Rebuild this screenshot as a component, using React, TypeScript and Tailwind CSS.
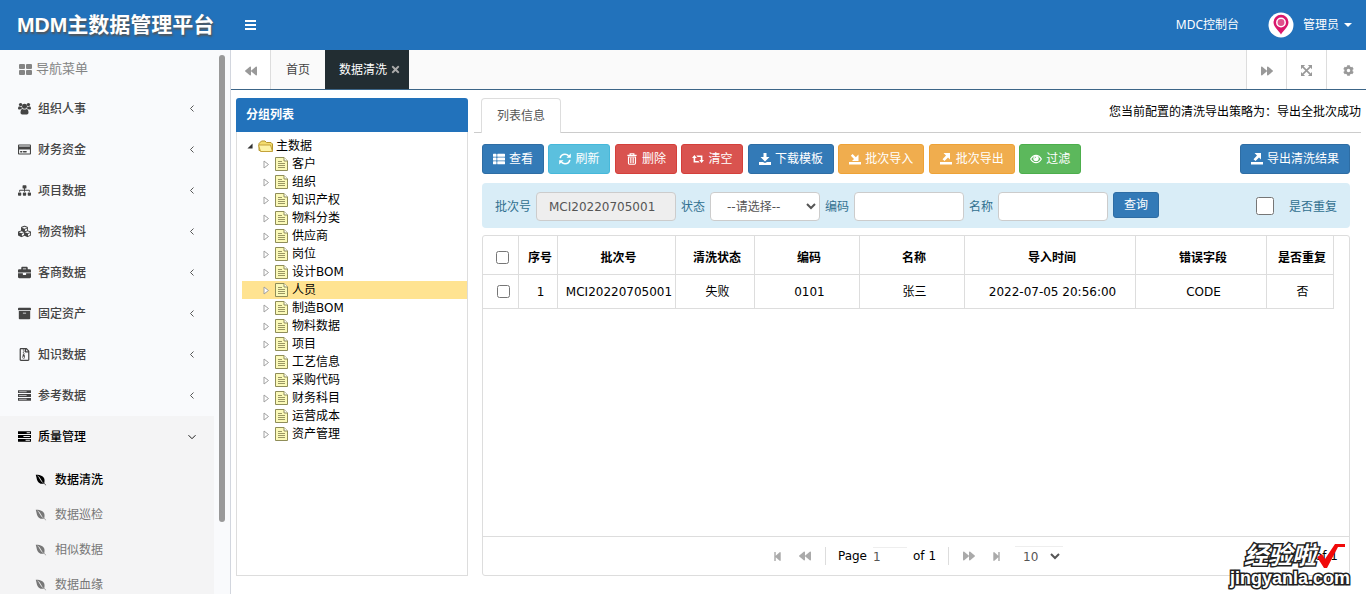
import React from 'react';
import {
  FaArchive,
  FaBackward,
  FaBriefcase,
  FaCog,
  FaCubes,
  FaEnvira,
  FaForward,
  FaRegCreditCard,
  FaRegFileArchive,
  FaSitemap,
  FaStepBackward,
  FaStepForward,
  FaThList,
  FaTimes,
} from 'react-icons/fa';

interface IconProps {
  className?: string;
}

type Icon = React.ComponentType<IconProps>;

const BarsIcon: React.FC<IconProps> = ({ className }) => (
  <svg viewBox="0 0 11 10" fill="currentColor" className={className}>
    <rect width="11" height="2" />
    <rect y="4" width="11" height="2" />
    <rect y="8" width="11" height="2" />
  </svg>
);

const GridIcon: React.FC<IconProps> = ({ className }) => (
  <svg viewBox="0 0 13 11" fill="currentColor" className={className}>
    <rect width="6" height="5" rx="1" />
    <rect x="7" width="6" height="5" rx="1" />
    <rect y="6" width="6" height="5" rx="1" />
    <rect x="7" y="6" width="6" height="5" rx="1" />
  </svg>
);

const UsersIcon: React.FC<IconProps> = ({ className }) => (
  <svg viewBox="0 0 13 13" fill="currentColor" className={className}>
    <circle cx="2.600" cy="2.600" r="1.700" />
    <circle cx="10.400" cy="2.600" r="1.700" />
    <circle cx="6.500" cy="4.200" r="2.500" />
    <path d="M0 6.800Q0 4.200 1.200 4.200q1.800.8 2.400.4Q3.700 6 4.300 6.600 3 6.700 2.400 7.600H1Q0 7.600 0 6.800zM13 6.800q0-2.600-1.200-2.600-1.800.8-2.400.4Q9.300 6 8.700 6.600q1.300.1 1.900 1H12q1 0 1-.8z" />
    <path d="M2.500 10.800q0-3.800 2-3.800 2 1.200 4 0 2 0 2 3.800 0 1.700-1.700 1.700H4.200q-1.700 0-1.700-1.700z" />
  </svg>
);

const ServerIcon: React.FC<IconProps> = ({ className }) => (
  <svg viewBox="0 0 12 12" fill="none" className={className}>
    <path d="M0 2.500h12M0 6h12M0 9.500h12" stroke="currentColor" strokeWidth="2.600" />
    <path d="M1 2.500h7M1 6h7M1 9.500h7" stroke="#c8c8ca" strokeWidth="0.800" />
  </svg>
);

const TasksIcon: React.FC<IconProps> = ({ className }) => (
  <svg viewBox="0 0 12 12" fill="none" className={className}>
    <path d="M0 2.500h12M0 6h12M0 9.500h12" stroke="currentColor" strokeWidth="2.600" />
    <path d="M8 2.500h3M5 6h6M7 9.500h4" stroke="#f4f4f5" strokeWidth="0.900" />
  </svg>
);

const RefreshIcon: React.FC<IconProps> = ({ className }) => (
  <svg viewBox="0 0 12 12" fill="none" stroke="currentColor" className={className}>
    <path d="M1.200 5.200C1.700 2.600 3.600 1.300 6 1.300q2 0 3.600 1.500M10.800 6.800C10.300 9.400 8.400 10.700 6 10.700q-2 0-3.600-1.500" strokeWidth="1.600" />
    <path d="M11.800.5v4.300H7.500zM.2 11.500V7.200h4.300z" fill="currentColor" stroke="none" />
  </svg>
);

const TrashIcon: React.FC<IconProps> = ({ className }) => (
  <svg viewBox="0 0 12 13" fill="none" stroke="currentColor" className={className}>
    <path d="M1 2.500h10M4 2.500V.8h4v1.700" strokeWidth="1.300" />
    <path d="M2.200 4v7.200q0 1 1 1h5.600q1 0 1-1V4M1.600 4.300h8.800" strokeWidth="1.200" />
    <path d="M4.300 5v6M6 5v6M7.700 5v6" strokeWidth="0.900" />
  </svg>
);

const RetweetIcon: React.FC<IconProps> = ({ className }) => (
  <svg viewBox="0 0 15 10" fill="currentColor" className={className}>
    <path d="M3 0l3 3.800H4V7.500h4L9.600 9.500H2V3.800H0z" />
    <path d="M12 10L9 6.200h2V2.500H7L5.400.5H13v5.700h2z" />
  </svg>
);

const SaveIcon: React.FC<IconProps> = ({ className }) => (
  <svg viewBox="0 0 12 12" fill="currentColor" className={className}>
    <path d="M4.500 0h3v4h3L6 8.500 1.500 4h3z" />
    <path d="M0 9h4l2 1 2-1h4v3H0z" />
  </svg>
);

const ImportIcon: React.FC<IconProps> = ({ className }) => (
  <svg viewBox="0 0 12 12" fill="currentColor" className={className}>
    <path d="M0 9h12v2.500H0z" />
    <path d="M9.500 8H3l2-2-3.200-3.200L3.600 1l3.200 3.200 2.700-2.700z" />
  </svg>
);

const ExportIcon: React.FC<IconProps> = ({ className }) => (
  <svg viewBox="0 0 12 12" fill="currentColor" className={className}>
    <path d="M0 9h12v2.500H0z" />
    <path d="M3.500 0H10v6.500l-2-2L4.500 8l-2-1.700L6 2.500z" />
  </svg>
);

const EyeIcon: React.FC<IconProps> = ({ className }) => (
  <svg viewBox="0 0 13 10" fill="none" stroke="currentColor" className={className}>
    <path d="M.7 5Q3 1 6.500 1t5.800 4Q10 9 6.500 9T.7 5z" strokeWidth="1.300" />
    <circle cx="6.500" cy="4.500" r="2.900" fill="currentColor" stroke="none" />
    <path d="M5.200 4.200q.2-1.200 1.400-1.300" stroke="#5cb85c" strokeWidth="0.900" />
  </svg>
);

const FullscreenIcon: React.FC<IconProps> = ({ className }) => (
  <svg viewBox="0 0 12 12" fill="currentColor" className={className}>
    <path d="M0 0h4.500L0 4.500zM12 0v4.500L7.500 0zM0 12V7.500L4.500 12zM12 12H7.500L12 7.500z" />
    <path d="M2 2l8 8M10 2l-8 8" stroke="currentColor" strokeWidth="1.800" />
  </svg>
);

const AngleIcon: React.FC<{ open?: boolean }> = ({ open }) => (
  <svg viewBox="0 0 8 8" fill="none" stroke="currentColor" strokeWidth="0.900" className="w-2 h-2">
    <path d={open ? 'M.5 2.200 4 5.700 7.500 2.200' : 'M5.500.5 2.500 3.500l3 3'} />
  </svg>
);

const TreeArrow: React.FC = () => (
  <svg viewBox="0 0 7 9" fill="#fff" stroke="#a0a0a0" className="w-[7px] h-[9px] ml-[21px]">
    <path d="M1 1v7l4.500-3.500z" />
  </svg>
);

const FileIcon: React.FC = () => (
  <svg viewBox="0 0 13 14" className="w-[13px] h-[14px] ml-[5px] mr-1">
    <path d="M1 .5h8L12.500 4v9.500H.5V.5z" fill="#fbf9b8" stroke="#8f8d58" />
    <path d="M9 .5V4h3.500" fill="#fff" stroke="#8f8d58" />
    <path d="M3 4.500h4M3 6.500h7M3 8.500h7M3 10.500h7" stroke="#9a9763" />
  </svg>
);

const FolderIcon: React.FC = () => (
  <svg viewBox="0 0 16 14" className="w-4 h-[14px] ml-[5px] mr-[2px]">
    <path d="M1 11.500V4.500L3.500 2H7l1.500 1.500H13l1.500 1.500v7z" fill="#f3dc6e" stroke="#b5952d" />
    <path d="M.5 6h12l2 6.500H2.500z" fill="#fdf3a6" stroke="#c4a23a" />
  </svg>
);

const menuItems: { label: string; icon: Icon }[] = [
  { label: '组织人事', icon: UsersIcon },
  { label: '财务资金', icon: FaRegCreditCard },
  { label: '项目数据', icon: FaSitemap },
  { label: '物资物料', icon: FaCubes },
  { label: '客商数据', icon: FaBriefcase },
  { label: '固定资产', icon: FaArchive },
  { label: '知识数据', icon: FaRegFileArchive },
  { label: '参考数据', icon: ServerIcon },
];

const subItems = ['数据清洗', '数据巡检', '相似数据', '数据血缘'];

const treeItems = [
  '客户', '组织', '知识产权', '物料分类', '供应商', '岗位', '设计BOM', '人员',
  '制造BOM', '物料数据', '项目', '工艺信息', '采购代码', '财务科目', '运营成本', '资产管理',
];

const tools: { label: string; icon: Icon; cls: string }[] = [
  { label: '查看', icon: FaThList, cls: 'bg-[#337ab7] border-[#2e6da4]' },
  { label: '刷新', icon: RefreshIcon, cls: 'bg-[#5bc0de] border-[#46b8da]' },
  { label: '删除', icon: TrashIcon, cls: 'bg-[#d9534f] border-[#d43f3a]' },
  { label: '清空', icon: RetweetIcon, cls: 'bg-[#d9534f] border-[#d43f3a]' },
  { label: '下载模板', icon: SaveIcon, cls: 'bg-[#337ab7] border-[#2e6da4]' },
  { label: '批次导入', icon: ImportIcon, cls: 'bg-[#f0ad4e] border-[#eea236]' },
  { label: '批次导出', icon: ExportIcon, cls: 'bg-[#f0ad4e] border-[#eea236]' },
  { label: '过滤', icon: EyeIcon, cls: 'bg-[#5cb85c] border-[#4cae4c]' },
];

const columns = [
  { label: '序号', width: 'w-[39px]', value: '1' },
  { label: '批次号', width: 'w-[118px]', value: 'MCI20220705001' },
  { label: '清洗状态', width: 'w-[79px]', value: '失败' },
  { label: '编码', width: 'w-[105px]', value: '0101' },
  { label: '名称', width: 'w-[105px]', value: '张三' },
  { label: '导入时间', width: '', value: '2022-07-05 20:56:00' },
  { label: '错误字段', width: 'w-[131px]', value: 'CODE' },
  { label: '是否重复', width: 'w-[67px]', value: '否' },
];

const btnCls = 'inline-flex items-center gap-1 h-[30px] px-[10px] border rounded-[3px] text-xs text-white align-top';
const inputCls = 'h-[29px] px-3 bg-white border border-[#ccc] rounded text-xs text-[#555]';
const thCls = 'border-r border-b border-[#ddd] pl-1 pt-[5px] text-center whitespace-nowrap';
const tdCls = 'border-r border-b border-[#ddd] pl-[5px] text-center whitespace-nowrap';
const tabBtnCls = 'flex items-center justify-center w-10 pt-[2px] bg-white text-[#999]';

const Header: React.FC = () => (
  <header className="flex items-center h-[50px] shrink-0 bg-[#2272bb] text-white text-xs font-['Noto_Sans','Noto_Sans_CJK_SC',sans-serif]">
    <h1 className="w-[231px] pl-[17px] text-[21px] font-bold whitespace-nowrap font-['Liberation_Sans','Noto_Sans_CJK_SC',sans-serif] [text-shadow:1px_2px_2px_#555]">
      MDM主数据管理平台
    </h1>
    <button type="button" aria-label="菜单" className="ml-[14px]">
      <BarsIcon className="w-[11px] h-[10px]" />
    </button>
    <a href="#mdc" className="ml-auto">MDC控制台</a>
    <button type="button" className="flex items-center ml-[29px] mr-[14px]">
      <svg viewBox="0 0 26 26" className="w-[26px] h-[26px] mr-[9px]">
        <circle cx="13" cy="13" r="12.500" fill="#fff" />
        <path d="M13 22.500C11 18.500 5.500 15.500 5.500 10a7.500 7.200 0 0 1 15 0c0 5.500-5.500 8.500-7.500 12.500z" fill="#d9176c" />
        <circle cx="13" cy="10.500" r="4.200" fill="#e0508c" stroke="#fff" strokeWidth="1.500" />
      </svg>
      管理员
      <svg viewBox="0 0 8 4" fill="currentColor" className="w-2 h-1 ml-[5px]">
        <path d="M0 0h8L4 4z" />
      </svg>
    </button>
  </header>
);

const Sidebar: React.FC = () => (
  <aside className="flex w-[231px] shrink-0 bg-[#f9fafc] border-r border-[#d2d6de] overflow-hidden">
    <nav className="w-[214px]">
      <div className="flex items-center h-[38px] pl-[19px] gap-1 text-[13px] text-[#848484]">
        <GridIcon className="w-[13px] h-[11px]" />
        导航菜单
      </div>
      {menuItems.map(({ label, icon: ItemIcon }) => (
        <a key={label} href="#menu" className="flex items-center h-[41px] px-[18px] font-medium text-[#444]">
          <ItemIcon className="w-[13px] h-[13px] mr-[7px]" />
          <span className="flex-1">{label}</span>
          <AngleIcon />
        </a>
      ))}
      <div className="h-full bg-[#f4f4f5]">
        <a href="#menu" className="flex items-center h-[41px] px-[18px] mb-[5px] font-medium text-black">
          <TasksIcon className="w-[13px] h-[13px] mr-[7px]" />
          <span className="flex-1">质量管理</span>
          <AngleIcon open />
        </a>
        {subItems.map((label, i) => (
          <a
            key={label}
            href="#menu"
            className={`flex items-center gap-2 h-[35px] pl-[35px] ${i === 0 ? 'font-medium text-black' : 'text-[#777]'}`}
          >
            <FaEnvira className="w-3 h-3" />
            {label}
          </a>
        ))}
      </div>
    </nav>
    <div className="w-[6px] h-[467px] mt-[5px] ml-[5px] rounded-full bg-[#999]" />
  </aside>
);

const TabBar: React.FC = () => (
  <div className="flex h-10 shrink-0 bg-[#fafafa] border-b border-[#3c6587]">
    <button type="button" aria-label="向左" className={`${tabBtnCls} border-r border-[#ddd]`}>
      <FaBackward className="w-3 h-3" />
    </button>
    <a href="#home" className="flex items-center px-[15px] text-[#444]">首页</a>
    <a href="#clean" className="flex items-center gap-[3px] pl-[14px] pr-2 bg-[#222d32] text-white">
      数据清洗
      <FaTimes className="w-[11px] h-[11px] text-[#aaa]" />
    </a>
    <div className="flex ml-auto">
      <button type="button" aria-label="向右" className={`${tabBtnCls} border-l border-[#ddd]`}>
        <FaForward className="w-3 h-3" />
      </button>
      <button type="button" aria-label="全屏" className={`${tabBtnCls} border-l border-[#ddd]`}>
        <FullscreenIcon className="w-[11px] h-[11px]" />
      </button>
      <button type="button" aria-label="设置" className={`${tabBtnCls} pl-1 border-l border-[#ddd]`}>
        <FaCog className="w-[11px] h-[11px]" />
      </button>
    </div>
  </div>
);

const GroupTree: React.FC = () => (
  <section className="flex flex-col w-[232px] shrink-0">
    <h2 className="h-[34px] pl-[10px] leading-[34px] rounded-t-[3px] bg-[#2272bb] text-white font-bold">分组列表</h2>
    <ul className="flex-1 pt-[5px] pl-[5px] border border-t-0 border-[#ddd] text-black leading-[18px]">
      <li className="flex items-center h-[18px] pl-[5px]">
        <svg viewBox="0 0 7 7" className="w-[6px] h-[6px]">
          <path d="M6.500.5v6h-6z" fill="#333" />
        </svg>
        <FolderIcon />
        主数据
      </li>
      {treeItems.map((label) => (
        <li key={label} className={`flex items-center h-[18px] ${label === '人员' ? 'bg-[#ffe391]' : ''}`}>
          <TreeArrow />
          <FileIcon />
          {label}
        </li>
      ))}
    </ul>
  </section>
);

const Filters: React.FC = () => (
  <form className="flex items-start gap-[5px] h-[45px] pt-[9px] px-[13px] mt-[9px] rounded bg-[#d9edf7] text-[#31708f] leading-[31px]">
    <label htmlFor="batch">批次号</label>
    <input id="batch" readOnly defaultValue="MCI20220705001" className="h-[29px] w-[140px] px-3 bg-[#eee] border border-[#ccc] rounded text-xs text-[#555]" />
    <label htmlFor="state">状态</label>
    <select id="state" className="h-[29px] w-[110px] pl-3 bg-white border border-[#ccc] rounded text-xs text-[#555]">
      <option>--请选择--</option>
    </select>
    <label htmlFor="code">编码</label>
    <input id="code" className={`${inputCls} w-[110px]`} />
    <label htmlFor="name">名称</label>
    <input id="name" className={`${inputCls} w-[110px]`} />
    <button type="button" className="h-[26px] px-[10px] border border-[#2e6da4] rounded-[3px] bg-[#337ab7] text-white leading-4">
      查询
    </button>
    <input id="repeat" type="checkbox" className="w-[18px] h-[18px] mt-[5px] ml-auto" />
    <label htmlFor="repeat" className="ml-[10px]">是否重复</label>
  </form>
);

const Pager: React.FC = () => (
  <div className="relative flex items-center justify-center h-[39px] pl-1 border-t border-[#ddd] text-black">
    <button type="button" aria-label="首页" className="text-[#aaa]"><FaStepBackward className="w-[9px] h-[11px]" /></button>
    <button type="button" aria-label="上一页" className="ml-[17px] text-[#aaa]"><FaBackward className="w-3 h-3" /></button>
    <span className="w-px h-[18px] ml-[14px] mr-3 bg-[#ddd]" />
    <label htmlFor="page">Page</label>
    <input id="page" defaultValue="1" className="w-[34px] h-[18px] mx-[6px] border-t border-[#eee] text-[#555]" />
    of 1
    <span className="w-px h-[18px] ml-3 mr-[14px] bg-[#ddd]" />
    <button type="button" aria-label="下一页" className="text-[#aaa]"><FaForward className="w-3 h-3" /></button>
    <button type="button" aria-label="末页" className="ml-[17px] text-[#aaa]"><FaStepForward className="w-[9px] h-[11px]" /></button>
    <select aria-label="每页条数" className="w-[48px] h-5 ml-[14px] pl-1 border-t border-[#eee] text-[#555]">
      <option>10</option>
    </select>
    <span className="absolute right-[11px]">of 1</span>
  </div>
);

const DataGrid: React.FC = () => (
  <div className="flex flex-col flex-1 mt-[7px] border border-[#ddd] rounded-[3px]">
    <div className="flex-1 pr-[15px]">
      <table className="w-full table-fixed border-separate border-spacing-0 text-black">
        <thead>
          <tr className="h-[39px]">
            <th className={`${thCls} w-9`}>
              <input type="checkbox" aria-label="全选" className="block w-[13px] h-[13px] mx-auto" />
            </th>
            {columns.map((c) => (
              <th key={c.label} className={`${thCls} ${c.width} font-bold`}>{c.label}</th>
            ))}
          </tr>
        </thead>
        <tbody>
          <tr className="h-[34px]">
            <td className={tdCls}>
              <input type="checkbox" aria-label="选择第1行" className="block w-[13px] h-[13px] mx-auto" />
            </td>
            {columns.map((c) => (
              <td key={c.label} className={tdCls}>{c.value}</td>
            ))}
          </tr>
        </tbody>
      </table>
    </div>
    <Pager />
  </div>
);

const Watermark: React.FC = () => (
  <div className="absolute right-4 bottom-[6px] text-right font-bold text-white [-webkit-text-stroke:3px_#222] [paint-order:stroke_fill]">
    <div className="flex items-center justify-end text-2xl leading-[22px] italic">
      <span>经验啦</span>
      <svg viewBox="0 0 30 24" className="w-[30px] h-6 mr-1">
        <path d="M1 13l5-3 3 5L19 0h10v3h-7L11 24H8z" fill="#f00a0a" />
      </svg>
    </div>
    <div className="text-[18px] leading-5 font-['Liberation_Sans',sans-serif]">jingyanla.com</div>
  </div>
);

export default function App() {
  return (
    <div className="relative flex flex-col h-screen overflow-hidden bg-white text-xs font-['DejaVu_Sans','Noto_Sans_CJK_SC',sans-serif]">
      <Header />
      <div className="flex flex-1 min-h-0">
        <Sidebar />
        <main className="flex flex-col flex-1 min-w-0">
          <TabBar />
          <div className="flex flex-1 gap-[6px] pt-2 px-[5px] pb-[18px]">
            <GroupTree />
            <section className="flex flex-col flex-1 min-w-0">
              <div className="flex items-end justify-between h-[35px] pl-[7px] border-b border-[#ccc]">
                <a href="#list" className="h-[35px] px-[15px] -mb-px border border-b-0 border-[#ddd] rounded-t bg-white text-[#555] leading-[35px]">
                  列表信息
                </a>
                <p className="self-start leading-[29px] text-black">您当前配置的清洗导出策略为：导出全批次成功</p>
              </div>
              <div className="flex flex-col flex-1 pl-2 pr-[11px] pt-[11px]">
                <div className="flex justify-between">
                  <div className="text-sm whitespace-nowrap h-[30px]">
                    {tools.map(({ label, icon: ToolIcon, cls }) => (
                      <React.Fragment key={label}>
                        <button type="button" className={`${btnCls} ${cls}`}>
                          <ToolIcon className="w-3 h-3" />
                          {label}
                        </button>{' '}
                      </React.Fragment>
                    ))}
                  </div>
                  <button type="button" className={`${btnCls} bg-[#337ab7] border-[#2e6da4]`}>
                    <ExportIcon className="w-3 h-3" />
                    导出清洗结果
                  </button>
                </div>
                <Filters />
                <DataGrid />
              </div>
            </section>
          </div>
        </main>
      </div>
      <Watermark />
    </div>
  );
}
